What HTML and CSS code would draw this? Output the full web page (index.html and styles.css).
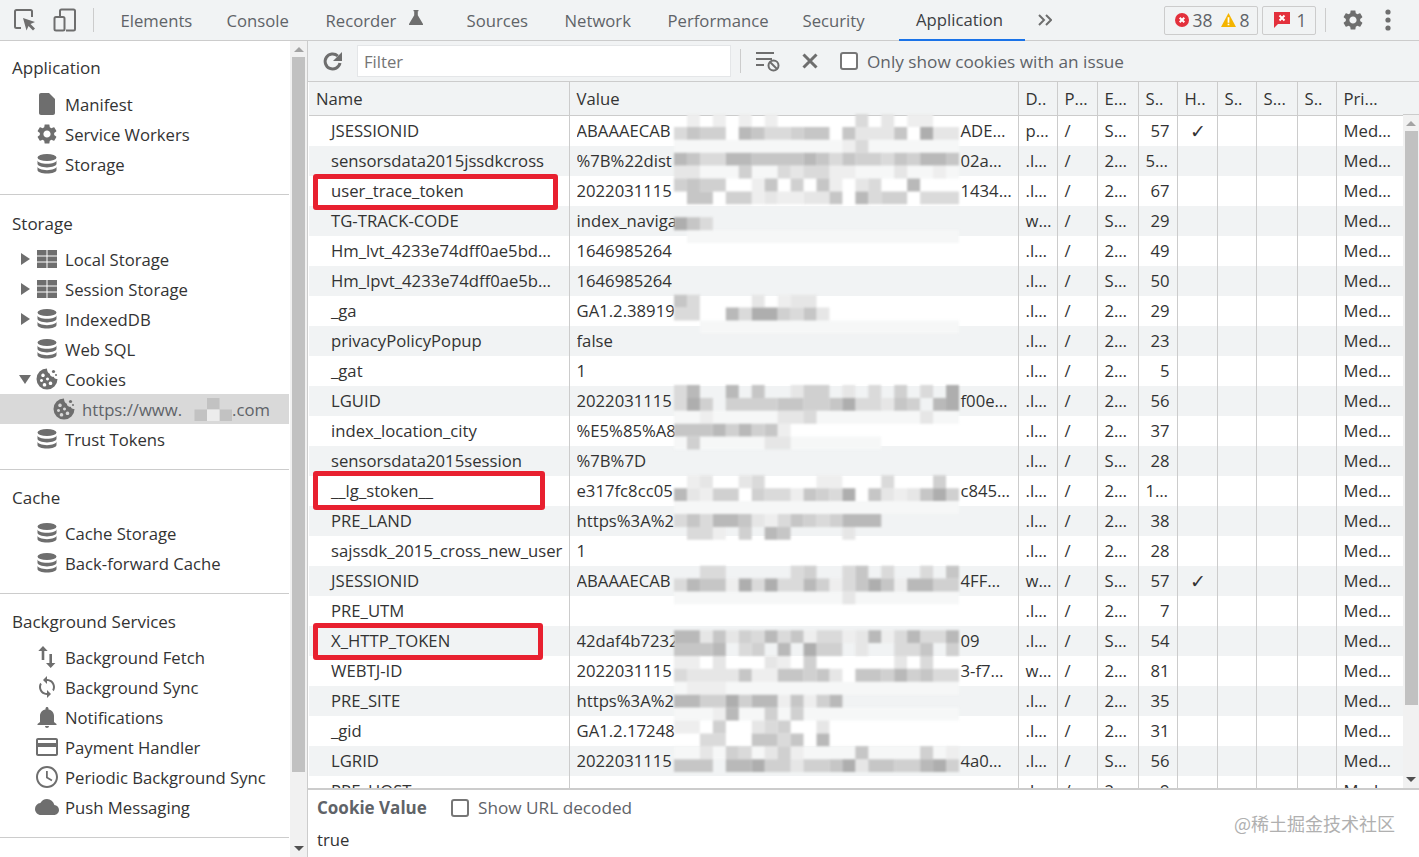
FILE: index.html
```html
<!DOCTYPE html>
<html lang="en">
<head>
<meta charset="utf-8">
<title>DevTools Application Cookies</title>
<link rel="stylesheet" href="styles.css">
</head>
<body>
<svg class="defs" aria-hidden="true">
  <symbol id="i-db" viewBox="0 0 24 24"><ellipse cx="12" cy="5.5" rx="9.5" ry="3.6"/><path d="M2.500 8.200c0 2 4.200 3.600 9.500 3.600s9.500-1.600 9.500-3.600v3.600c0 2-4.200 3.600-9.500 3.600s-9.500-1.600-9.500-3.600z"/><path d="M2.500 14.600c0 2 4.200 3.600 9.500 3.600s9.500-1.600 9.500-3.600v3.400c0 2-4.200 3.600-9.500 3.600s-9.500-1.600-9.500-3.600z"/></symbol>
  <symbol id="i-grid" viewBox="0 0 24 24"><path d="M2 3h9.500v5.400H2zM12.500 3H22v5.400h-9.500zM2 9.400h9.500v5.200H2zM12.500 9.400H22v5.200h-9.500zM2 15.600h9.500V21H2zM12.500 15.600H22V21h-9.500z"/></symbol>
  <symbol id="i-cookie" viewBox="0 0 24 24"><path fill-rule="evenodd" d="M12 1.500A10.500 10.500 0 1 0 22.500 12c-1.700.4-3.300-.6-3.700-2.200-2 .5-3.900-1-4-3-1.800-.5-3-3.300-2.800-5.300zM8 6.500a1.800 1.800 0 1 0 .01 0zM6.500 12a1.500 1.500 0 1 0 .01 0zM12.500 10.500a1.500 1.500 0 1 0 .01 0zM9.500 16a1.800 1.800 0 1 0 .01 0zM15.500 14.500a1.800 1.800 0 1 0 .01 0z"/><circle cx="18.500" cy="4.500" r="1.600"/><circle cx="21" cy="8" r="1"/></symbol>
  <symbol id="i-file" viewBox="0 0 24 24"><path d="M14 1H6C4.900 1 4 1.900 4 3v18c0 1.100.9 2 2 2h12c1.100 0 2-.9 2-2V7z"/></symbol>
  <symbol id="i-gear" viewBox="0 0 24 24"><path d="M19.140 12.940c.04-.3.06-.61.06-.94 0-.32-.02-.64-.07-.94l2.030-1.580c.18-.14.23-.41.12-.61l-1.920-3.320c-.12-.22-.37-.29-.59-.22l-2.390.96c-.5-.38-1.030-.7-1.620-.94l-.36-2.540c-.04-.24-.24-.41-.48-.41h-3.840c-.24 0-.43.17-.47.41l-.36 2.540c-.59.24-1.130.57-1.620.94l-2.390-.96c-.22-.08-.47 0-.59.22L2.740 8.870c-.12.21-.08.47.12.61l2.030 1.580c-.05.3-.09.63-.09.94s.02.64.07.94l-2.030 1.580c-.18.14-.23.41-.12.61l1.920 3.320c.12.22.37.29.59.22l2.390-.96c.5.38 1.030.7 1.620.94l.36 2.540c.05.24.24.41.48.41h3.840c.24 0 .44-.17.47-.41l.36-2.540c.59-.24 1.130-.56 1.620-.94l2.390.96c.22.08.47 0 .59-.22l1.920-3.320c.12-.22.07-.47-.12-.61l-2.010-1.580zM12 15.600c-1.980 0-3.600-1.620-3.600-3.600s1.620-3.600 3.600-3.600 3.600 1.620 3.600 3.600-1.620 3.600-3.600 3.600z"/></symbol>
  <symbol id="i-fetch" viewBox="0 0 24 24"><path d="M17 18V9h-2.600v9H11l4.700 5 4.700-5zM8 1L3.300 6h3.400v9h2.600V6h3.400z"/></symbol>
  <symbol id="i-sync" viewBox="0 0 24 24"><path d="M12 4V1L8 5l4 4V6c3.310 0 6 2.690 6 6 0 1.010-.25 1.970-.7 2.800l1.460 1.460A7.930 7.930 0 0 0 20 12c0-4.420-3.580-8-8-8zm0 14c-3.310 0-6-2.690-6-6 0-1.010.25-1.970.7-2.800L5.240 7.740A7.930 7.930 0 0 0 4 12c0 4.420 3.580 8 8 8v3l4-4-4-4v3z"/></symbol>
  <symbol id="i-bell" viewBox="0 0 24 24"><path d="M12 23c1.100 0 2-.9 2-2h-4c0 1.100.9 2 2 2zm7-6v-6c0-3.300-2-5.900-5.500-6.500V3.500C13.500 2.700 12.800 2 12 2s-1.500.7-1.500 1.500v1C7 5.100 5 7.700 5 11v6l-2.500 2v1h19v-1z"/></symbol>
  <symbol id="i-pay" viewBox="0 0 24 24"><path d="M21 3H3C1.900 3 1 3.900 1 5v14c0 1.100.9 2 2 2h18c1.100 0 2-.9 2-2V5c0-1.100-.9-2-2-2zm0 16H3v-7h18zm0-11H3V5h18z"/></symbol>
  <symbol id="i-clock" viewBox="0 0 24 24"><path d="M12 1C5.900 1 1 5.900 1 12s4.900 11 11 11 11-4.900 11-11S18.100 1 12 1zm0 20c-5 0-9-4-9-9s4-9 9-9 9 4 9 9-4 9-9 9zm.8-15H11v7l5.500 3.300.9-1.500-4.600-2.700z"/></symbol>
  <symbol id="i-cloud" viewBox="0 0 24 24"><path d="M19.350 10.040A7.490 7.490 0 0 0 12 4C9.110 4 6.600 5.640 5.350 8.040A5.994 5.994 0 0 0 0 14c0 3.310 2.690 6 6 6h13c2.760 0 5-2.240 5-5 0-2.640-2.050-4.780-4.650-4.960z"/></symbol>
</svg>

<div class="app">
  <header class="topbar">
    <svg class="ic ic-inspect" viewBox="0 0 22 22"><path class="line" d="M7 19H2.500a1.500 1.500 0 0 1-1.500-1.500v-15A1.500 1.500 0 0 1 2.500 1h14A1.500 1.500 0 0 1 18 2.500V8"/><path d="M9 9l12 4-4.500 2 4.500 4.500-2 2-4.500-4.500-2 4.500z"/></svg>
    <svg class="ic ic-device" viewBox="0 0 24 24"><path class="line" d="M7 9V3a1.500 1.500 0 0 1 1.500-1.500h12A1.500 1.500 0 0 1 22 3v18a1.500 1.500 0 0 1-1.500 1.500H13"/><rect class="line" x="1.500" y="9" width="10" height="13.500" rx="1.500"/></svg>
    <span class="vsep vsep-main"></span>
    <nav class="tabs">
      <span class="tab">Elements</span>
      <span class="tab">Console</span>
      <span class="tab">Recorder<svg class="flask" viewBox="0 0 14 15"><path d="M4.500 0h5v1.200H8.800v4L14 14c.2.500 0 1-.6 1H.6c-.6 0-.8-.5-.6-1l5.200-8.800v-4h-.7z"/></svg></span>
      <span class="tab">Sources</span>
      <span class="tab">Network</span>
      <span class="tab">Performance</span>
      <span class="tab">Security</span>
      <span class="tab tab-active">Application</span>
    </nav>
    <svg class="more" viewBox="0 0 14 12"><path d="M1 1l5 5-5 5M8 1l5 5-5 5"/></svg>
    <div class="badge badge-a">
      <svg class="bi" viewBox="0 0 14 14"><circle class="err" cx="7" cy="7" r="7"/><path class="wx" d="M4.700 4.700l4.600 4.600M9.300 4.700L4.700 9.300"/></svg><span class="bn">38</span>
      <svg class="bi bi-w" viewBox="0 0 14 13"><path class="warn" d="M7 0l7 13H0z"/><path class="wm" d="M6.200 4h1.600v5H6.200zM6.200 10h1.600v1.500H6.200z"/></svg><span class="bn">8</span>
    </div>
    <div class="badge badge-b">
      <svg class="bf" viewBox="0 0 16 16"><path class="err" d="M0 0h16v12H4l-4 4z"/><path class="wx" d="M5.500 3.500l5 5M10.500 3.500l-5 5"/></svg><span class="bn bn-1">1</span>
    </div>
    <span class="vsep vsep-right"></span>
    <svg class="ic ic-gear"><use href="#i-gear"/></svg>
    <svg class="ic ic-dots" viewBox="0 0 6 22"><circle cx="3" cy="3" r="2.600"/><circle cx="3" cy="11" r="2.600"/><circle cx="3" cy="19" r="2.600"/></svg>
  </header>

  <div class="main">
    <aside class="sidebar">
      <div class="side-list">
        <section class="sec sec-first">
          <h2 class="sec-h">Application</h2>
          <div class="it"><svg class="ii"><use href="#i-file"/></svg>Manifest</div>
          <div class="it"><svg class="ii"><use href="#i-gear"/></svg>Service Workers</div>
          <div class="it"><svg class="ii"><use href="#i-db"/></svg>Storage</div>
        </section>
        <section class="sec sec-storage">
          <h2 class="sec-h">Storage</h2>
          <div class="it"><i class="ar"></i><svg class="ii"><use href="#i-grid"/></svg>Local Storage</div>
          <div class="it"><i class="ar"></i><svg class="ii"><use href="#i-grid"/></svg>Session Storage</div>
          <div class="it"><i class="ar"></i><svg class="ii"><use href="#i-db"/></svg>IndexedDB</div>
          <div class="it"><svg class="ii"><use href="#i-db"/></svg>Web SQL</div>
          <div class="it"><i class="ar ar-open"></i><svg class="ii"><use href="#i-cookie"/></svg>Cookies</div>
          <div class="it it-sel"><svg class="ii"><use href="#i-cookie"/></svg>https://www.<svg class="host-blur" viewBox="0 0 4 2" preserveAspectRatio="none"><path class="hb1" d="M1 1h1v1H1zM2 0h1v1H2zM3 1h1v1H3z"/><path class="hb2" d="M2 1h1v1H2z"/></svg>.com</div>
          <div class="it"><svg class="ii"><use href="#i-db"/></svg>Trust Tokens</div>
        </section>
        <section class="sec">
          <h2 class="sec-h">Cache</h2>
          <div class="it"><svg class="ii"><use href="#i-db"/></svg>Cache Storage</div>
          <div class="it"><svg class="ii"><use href="#i-db"/></svg>Back-forward Cache</div>
        </section>
        <section class="sec">
          <h2 class="sec-h">Background Services</h2>
          <div class="it"><svg class="ii"><use href="#i-fetch"/></svg>Background Fetch</div>
          <div class="it"><svg class="ii"><use href="#i-sync"/></svg>Background Sync</div>
          <div class="it"><svg class="ii"><use href="#i-bell"/></svg>Notifications</div>
          <div class="it"><svg class="ii"><use href="#i-pay"/></svg>Payment Handler</div>
          <div class="it"><svg class="ii"><use href="#i-clock"/></svg>Periodic Background Sync</div>
          <div class="it"><svg class="ii"><use href="#i-cloud"/></svg>Push Messaging</div>
        </section>
      </div>
      <div class="vbar vbar-side">
        <i class="up"></i><b class="thumb thumb-side"></b><i class="down"></i>
      </div>
    </aside>

    <div class="pane">
      <div class="toolbar">
        <svg class="ic ic-refresh" viewBox="0 0 24 24"><path class="line line-thick" d="M19 14a7.500 7.500 0 1 1-2.200-7"/><path d="M21 3v9h-9z"/></svg>
        <div class="filter">Filter</div>
        <span class="vsep vsep-tool"></span>
        <svg class="ic ic-cf" viewBox="0 0 26 22"><path class="line" d="M1 3h18M1 9h16M1 15h8"/><circle class="line" cx="18.500" cy="15.500" r="5"/><path class="line" d="M15 12l7 7"/></svg>
        <svg class="ic ic-x" viewBox="0 0 16 16"><path class="line line-thick" d="M1.500 1.500l13 13M14.500 1.500l-13 13"/></svg>
        <span class="cb cb-tool"></span>
        <span class="tool-label">Only show cookies with an issue</span>
      </div>

      <div class="gridwrap">
        <div class="grid">
          <table class="tbl">
            <colgroup>
              <col class="c-name"><col class="c-val"><col class="c-d"><col class="c-p"><col class="c-e"><col class="c-s"><col class="c-h"><col class="c-d"><col class="c-e"><col class="c-d"><col class="c-pri">
            </colgroup>
            <thead>
              <tr><th>Name</th><th>Value</th><th>D..</th><th>P...</th><th>E...</th><th>S..</th><th>H..</th><th>S..</th><th>S...</th><th>S..</th><th>Pri...</th></tr>
            </thead>
            <tbody>
              <tr><td class="n">JSESSIONID</td><td><div class="val"><span class="vl">ABAAAECAB</span><span class="vr">ADE…</span></div></td><td>p…</td><td>/</td><td>S…</td><td class="sz">57</td><td class="ck">✓</td><td></td><td></td><td></td><td>Med…</td></tr>
              <tr><td class="n">sensorsdata2015jssdkcross</td><td><div class="val"><span class="vl">%7B%22dist</span><span class="vr">02a…</span></div></td><td>.l…</td><td>/</td><td>2…</td><td>5…</td><td></td><td></td><td></td><td></td><td>Med…</td></tr>
              <tr><td class="n">user_trace_token</td><td><div class="val"><span class="vl">2022031115</span><span class="vr">1434…</span></div></td><td>.l…</td><td>/</td><td>2…</td><td class="sz">67</td><td></td><td></td><td></td><td></td><td>Med…</td></tr>
              <tr><td class="n">TG-TRACK-CODE</td><td><div class="val"><span class="vl">index_naviga</span></div></td><td>w…</td><td>/</td><td>S…</td><td class="sz">29</td><td></td><td></td><td></td><td></td><td>Med…</td></tr>
              <tr><td class="n">Hm_lvt_4233e74dff0ae5bd…</td><td><div class="val"><span class="vl">1646985264</span></div></td><td>.l…</td><td>/</td><td>2…</td><td class="sz">49</td><td></td><td></td><td></td><td></td><td>Med…</td></tr>
              <tr><td class="n">Hm_lpvt_4233e74dff0ae5b…</td><td><div class="val"><span class="vl">1646985264</span></div></td><td>.l…</td><td>/</td><td>S…</td><td class="sz">50</td><td></td><td></td><td></td><td></td><td>Med…</td></tr>
              <tr><td class="n">_ga</td><td><div class="val"><span class="vl">GA1.2.38919</span></div></td><td>.l…</td><td>/</td><td>2…</td><td class="sz">29</td><td></td><td></td><td></td><td></td><td>Med…</td></tr>
              <tr><td class="n">privacyPolicyPopup</td><td><div class="val"><span class="vl">false</span></div></td><td>.l…</td><td>/</td><td>2…</td><td class="sz">23</td><td></td><td></td><td></td><td></td><td>Med…</td></tr>
              <tr><td class="n">_gat</td><td><div class="val"><span class="vl">1</span></div></td><td>.l…</td><td>/</td><td>2…</td><td class="sz">5</td><td></td><td></td><td></td><td></td><td>Med…</td></tr>
              <tr><td class="n">LGUID</td><td><div class="val"><span class="vl">2022031115</span><span class="vr">f00e…</span></div></td><td>.l…</td><td>/</td><td>2…</td><td class="sz">56</td><td></td><td></td><td></td><td></td><td>Med…</td></tr>
              <tr><td class="n">index_location_city</td><td><div class="val"><span class="vl">%E5%85%A8</span></div></td><td>.l…</td><td>/</td><td>2…</td><td class="sz">37</td><td></td><td></td><td></td><td></td><td>Med…</td></tr>
              <tr><td class="n">sensorsdata2015session</td><td><div class="val"><span class="vl">%7B%7D</span></div></td><td>.l…</td><td>/</td><td>S…</td><td class="sz">28</td><td></td><td></td><td></td><td></td><td>Med…</td></tr>
              <tr><td class="n">__lg_stoken__</td><td><div class="val"><span class="vl">e317fc8cc05</span><span class="vr">c845…</span></div></td><td>.l…</td><td>/</td><td>2…</td><td>1…</td><td></td><td></td><td></td><td></td><td>Med…</td></tr>
              <tr><td class="n">PRE_LAND</td><td><div class="val"><span class="vl">https%3A%2</span></div></td><td>.l…</td><td>/</td><td>2…</td><td class="sz">38</td><td></td><td></td><td></td><td></td><td>Med…</td></tr>
              <tr><td class="n">sajssdk_2015_cross_new_user</td><td><div class="val"><span class="vl">1</span></div></td><td>.l…</td><td>/</td><td>2…</td><td class="sz">28</td><td></td><td></td><td></td><td></td><td>Med…</td></tr>
              <tr><td class="n">JSESSIONID</td><td><div class="val"><span class="vl">ABAAAECAB</span><span class="vr">4FF…</span></div></td><td>w…</td><td>/</td><td>S…</td><td class="sz">57</td><td class="ck">✓</td><td></td><td></td><td></td><td>Med…</td></tr>
              <tr><td class="n">PRE_UTM</td><td></td><td>.l…</td><td>/</td><td>2…</td><td class="sz">7</td><td></td><td></td><td></td><td></td><td>Med…</td></tr>
              <tr><td class="n">X_HTTP_TOKEN</td><td><div class="val"><span class="vl">42daf4b7232</span><span class="vr">09</span></div></td><td>.l…</td><td>/</td><td>S…</td><td class="sz">54</td><td></td><td></td><td></td><td></td><td>Med…</td></tr>
              <tr><td class="n">WEBTJ-ID</td><td><div class="val"><span class="vl">2022031115</span><span class="vr">3-f7…</span></div></td><td>w…</td><td>/</td><td>2…</td><td class="sz">81</td><td></td><td></td><td></td><td></td><td>Med…</td></tr>
              <tr><td class="n">PRE_SITE</td><td><div class="val"><span class="vl">https%3A%2</span></div></td><td>.l…</td><td>/</td><td>2…</td><td class="sz">35</td><td></td><td></td><td></td><td></td><td>Med…</td></tr>
              <tr><td class="n">_gid</td><td><div class="val"><span class="vl">GA1.2.17248</span></div></td><td>.l…</td><td>/</td><td>2…</td><td class="sz">31</td><td></td><td></td><td></td><td></td><td>Med…</td></tr>
              <tr><td class="n">LGRID</td><td><div class="val"><span class="vl">2022031115</span><span class="vr">4a0…</span></div></td><td>.l…</td><td>/</td><td>S…</td><td class="sz">56</td><td></td><td></td><td></td><td></td><td>Med…</td></tr>
              <tr><td class="n">PRE_HOST</td><td></td><td>.l…</td><td>/</td><td>2…</td><td class="sz">9</td><td></td><td></td><td></td><td></td><td>Med…</td></tr>
            </tbody>
          </table>
        </div>
        <div class="vbar vbar-grid">
          <span class="gs-head"></span>
          <i class="up"></i><b class="thumb thumb-grid"></b><i class="down"></i>
        </div>

        <svg class="mosaic" viewBox="0 0 22 52" preserveAspectRatio="none" aria-hidden="true">
          <g transform="translate(0 .5)">
            <path class="s8" d="M0 2h22M0 4h22M1 9h21M2 16h20M0 23h22M0 25h16M0 30h22M0 37h22M0 44h22M0 46h22M0 49h22"/>
            <path class="s7" d="M1 0h1M3 0h1M5 0h1M7 0h1M18 0h2M13 2h1M12 4h2M20 4h1M6 5h1M12 5h1M6 6h1M8 6h2M8 14h1M2 23h1M8 24h1M1 28h1M11 28h2M2 29h1M9 29h1M17 29h1M7 31h1M3 32h1M4 36h1M12 36h1M17 36h1M10 40h1M13 40h1M16 40h1M0 42h2M8 42h1M6 43h2M1 44h3M8 45h1M10 45h1M3 46h1M0 47h2M9 49h1M21 49h1"/>
            <path class="s6" d="M16 0h1M14 1h3M20 1h2M0 4h2M9 4h1M17 4h1M14 5h1M7 6h1M10 6h2M6 14h1M9 14h2M11 15h1M9 21h1M13 21h1M16 22h1M8 23h2M19 23h1M7 25h2M2 28h1M5 28h1M1 29h1M16 29h1M18 29h1M6 31h1M13 32h1M13 37h1M2 40h1M4 40h1M14 40h1M14 41h1M3 42h1M7 42h1M17 42h1M1 43h4M12 43h1M6 47h1M11 47h1M2 49h1M7 49h1M9 50h1M14 50h1"/>
            <path class="s5" d="M14 0h1M0 1h1M7 1h2M14 2h1M2 3h2M12 3h1M16 3h1M8 4h1M10 4h2M15 5h1M15 6h1M19 6h3M2 8h1M1 14h1M0 15h2M5 15h1M9 15h1M0 21h1M15 21h1M19 21h1M0 22h1M14 22h2M10 23h1M6 28h1M16 28h1M7 29h2M12 29h1M0 31h1M2 31h1M8 31h1M11 31h1M1 32h2M2 35h2M9 35h1M13 35h1M16 35h1M19 35h1M0 36h1M6 36h1M8 36h2M13 36h1M6 40h1M8 40h1M11 40h2M17 40h1M19 40h2M5 41h1M17 41h2M19 42h1M0 43h1M20 43h2M7 47h1M2 48h2M8 48h1M5 49h1"/>
            <path class="s4" d="M2 1h2M9 1h1M14 3h2M18 3h1M5 4h1M0 5h1M2 5h2M9 5h1M4 6h2M16 6h2M8 15h1M10 21h2M17 21h1M2 22h1M4 22h4M10 22h2M18 22h1M4 24h1M6 24h1M1 25h1M20 28h1M3 29h2M6 29h1M11 29h1M21 29h1M10 31h1M12 31h1M5 32h1M10 35h1M11 36h1M20 36h2M5 40h1M6 41h1M11 41h2M21 41h1M10 42h1M10 43h1M16 43h1M18 43h1M2 45h2M5 45h1M11 45h1M7 46h1M9 46h1M3 47h1M8 47h1M4 49h1M8 49h1M19 49h1M7 50h2M10 50h2M17 50h2M21 50h1"/>
            <path class="s3" d="M1 1h1M6 1h1M10 1h2M13 1h1M17 1h1M1 3h1M6 3h4M11 3h1M13 3h1M17 3h1M21 3h1M1 5h1M7 5h1M11 5h1M1 6h2M12 6h1M1 8h1M0 14h1M10 15h1M6 21h1M8 22h2M12 22h1M17 22h1M0 24h3M7 24h1M10 29h1M15 29h1M19 29h1M1 31h1M5 31h1M9 31h1M8 32h1M14 35h1M21 35h1M2 36h2M14 36h1M16 36h1M3 40h1M9 40h1M0 41h3M19 41h1M5 43h1M8 43h2M11 43h1M14 43h2M19 43h1M9 45h1M6 48h2M9 48h1M14 49h1M0 50h3M12 50h1M15 50h2"/>
            <path class="s2" d="M5 1h1M0 3h1M4 3h2M10 3h1M19 3h2M18 5h1M14 6h1M4 15h1M1 21h1M4 21h1M20 22h1M3 24h1M5 24h1M0 29h1M3 31h2M13 31h3M7 32h1M1 36h1M10 36h1M18 36h2M0 40h2M7 40h1M15 40h1M18 40h1M21 40h1M3 41h1M8 41h1M17 43h1M0 45h2M6 45h2M12 45h1M4 46h1M11 48h1M4 50h2M19 50h1"/>
            <path class="s1" d="M19 1h1M0 8h1M6 15h2M21 21h1M1 22h1M13 22h1M21 22h1M13 29h1M20 29h1M5 36h1M7 36h1M15 36h1M10 41h1M4 45h1M6 50h1M13 50h1M20 50h1"/>
          </g>
        </svg>

        <span class="mark mark-a"></span>
        <span class="mark mark-b"></span>
        <span class="mark mark-c"></span>
      </div>

      <div class="detail">
        <div class="detail-top">
          <strong class="detail-title">Cookie Value</strong>
          <span class="cb"></span>
          <span class="tool-label">Show URL decoded</span>
        </div>
        <div class="detail-val">true</div>
        <div class="watermark">@稀土掘金技术社区</div>
      </div>
    </div>
  </div>
</div>
</body>
</html>
```

FILE: styles.css
```css
* { box-sizing: border-box; }
html, body { margin: 0; padding: 0; }
body { font-family: "Open Sans", "Noto Sans", sans-serif; font-size: 16.7px; color: #333; background: #fff; }
.defs { position: absolute; width: 0; height: 0; }
.app { width: 1419px; height: 857px; display: flex; flex-direction: column; overflow: hidden; }

.ic { flex: none; fill: #6e6e6e; }
.line { fill: none; stroke: #6e6e6e; stroke-width: 2; }
.line-thick { stroke-width: 3; }

.topbar { flex: none; height: 41px; display: flex; align-items: center; background: #f1f3f4; border-bottom: 1px solid #ccc; color: #5f6368; }
.ic-inspect { width: 22px; height: 22px; margin-left: 14px; }
.ic-device { width: 24px; height: 24px; margin-left: 17px; }
.vsep { flex: none; width: 1px; background: #ccc; }
.vsep-main { height: 24px; margin-left: 16px; }
.tabs { flex: none; display: grid; grid-template-columns: 106px 99px 141px 98px 103px 135px 113.500px 126px; align-self: stretch; margin-left: 9px; }
.tab { display: flex; align-items: center; padding-left: 17.500px; white-space: nowrap; }
.flask { width: 14px; height: 15px; margin: -6px 0 0 13px; fill: #6e6e6e; }
.tab-active { color: #3c4043; border-bottom: 2px solid #1a73e8; margin-bottom: -1px; }
.more { width: 14px; height: 12px; margin-left: 13px; fill: none; stroke: #6e6e6e; stroke-width: 2; }
.badge { flex: none; display: flex; align-items: center; height: 29px; border: 1px solid #ccc; border-radius: 2px; font-size: 17.500px; }
.badge-a { width: 94px; margin-left: 112px; padding-left: 10px; }
.badge-b { width: 54px; margin-left: 4px; padding-left: 11px; }
.bi { width: 14px; height: 14px; }
.bi-w { width: 15px; margin-left: 8px; }
.bf { width: 16px; height: 16px; }
.bn { margin-left: 4px; color: #5f6368; }
.bn-1 { margin-left: 7px; }
.err { fill: #e3303c; }
.warn { fill: #f4b400; }
.wm { fill: #fff; }
.wx { stroke: #fff; stroke-width: 2; fill: none; }
.vsep-right { height: 24px; margin-left: 9px; }
.ic-gear { width: 24px; height: 24px; margin-left: 15px; }
.ic-dots { width: 6px; height: 22px; margin-left: 20px; }

.main { flex: 1; min-height: 0; display: flex; }
.sidebar { flex: none; width: 308px; display: flex; border-right: 1px solid #ccc; }
.side-list { flex: none; width: 290px; padding-right: 1px; }
.sec { border-bottom: 1px solid #ccc; padding: 13px 0 15px; }
.sec-first { padding-top: 12px; }
.sec-first .sec-h { margin-bottom: 6px; }
.sec-storage { padding-top: 14px; }
.sec-h { margin: 0 0 5px; height: 30px; line-height: 30px; padding-left: 12px; font-size: 17px; font-weight: 400; }
.it { position: relative; display: flex; align-items: center; height: 30px; padding-left: 35px; white-space: nowrap; }
.ii { flex: none; width: 24px; height: 24px; margin-right: 6px; fill: #6e6e6e; }
.ar { position: absolute; left: 21px; top: 9px; border-style: solid; border-width: 6px 0 6px 9px; border-color: transparent transparent transparent #6e6e6e; }
.ar-open { left: 19px; top: 11px; border-width: 9px 6px 0; border-color: #6e6e6e transparent transparent; }
.it-sel { background: #d9d9d9; padding-left: 52px; color: #5f6368; }
.host-blur { flex: none; width: 50px; height: 23px; }
.hb1 { fill: #c2c2c2; }
.hb2 { fill: #ececec; }

.vbar { flex: none; width: 17px; display: flex; flex-direction: column; align-items: center; background: #f1f1f1; position: relative; }
.up { flex: none; width: 0; height: 0; margin: 6px 0 5px; border-style: solid; border-width: 0 5px 5px; border-color: transparent transparent #a3a3a3; }
.down { flex: none; width: 0; height: 0; position: absolute; bottom: 6px; border-style: solid; border-width: 5px 5px 0; border-color: #505050 transparent transparent; }
.thumb { flex: none; display: block; width: 13px; background: #c1c1c1; }
.thumb-side { height: 715px; }
.thumb-grid { height: 574px; }

.pane { flex: 1; min-width: 0; display: flex; flex-direction: column; }
.toolbar { flex: none; height: 41px; display: flex; align-items: center; background: #f1f3f4; border-bottom: 1px solid #ccc; }
.ic-refresh { width: 24px; height: 24px; margin-left: 13px; }
.filter { flex: none; width: 374px; height: 32px; margin-left: 12px; padding-left: 6px; line-height: 31px; background: #fff; border: 1px solid #e4e6e8; color: #757575; }
.vsep-tool { height: 24px; margin-left: 9px; }
.ic-cf { width: 26px; height: 22px; margin-left: 14px; }
.ic-x { width: 16px; height: 16px; margin-left: 21px; }
.cb { flex: none; width: 18px; height: 18px; border: 2px solid #767676; border-radius: 3px; background: #fff; }
.cb-tool { margin-left: 22px; }
.tool-label { margin-left: 9px; color: #5f6368; white-space: nowrap; font-size: 17.200px; }

.gridwrap { flex: none; height: 708px; position: relative; display: flex; border-bottom: 2px solid #ccc; overflow: hidden; }
.grid { flex: none; width: 1094px; margin-left: 1px; overflow: hidden; }
.vbar-grid { width: 16px; }
.gs-head { flex: none; align-self: stretch; height: 33px; background: #f1f3f4; border-bottom: 1px solid #ccc; }
.tbl { width: 1094px; table-layout: fixed; border-collapse: collapse; }
.c-name { width: 260px; }
.c-val { width: 449px; }
.c-d { width: 39px; }
.c-p { width: 40px; }
.c-e { width: 41px; }
.c-s { width: 39px; }
.c-h { width: 40px; }
.c-pri { width: 67px; }
.tbl th, .tbl td { height: 30px; padding: 0 0 0 7px; border-right: 1px solid #ccc; font-weight: 400; text-align: left; white-space: nowrap; overflow: hidden; line-height: 30px; }
.tbl th:last-child, .tbl td:last-child { border-right: 0; }
.tbl th { height: 33px; padding-top: 1px; background: #f1f3f4; border-bottom: 1px solid #ccc; }
.tbl tbody tr:nth-child(even) td { background: #f1f3f4; }
.tbl td.n { padding-left: 22px; }
.tbl td.sz { text-align: right; padding-right: 7px; }
.tbl td.ck { padding-left: 12px; font-size: 18.500px; }
.val { display: flex; }
.vl { flex: none; width: 98px; overflow: hidden; }
.vr { flex: none; margin-left: 286px; }

.mosaic { position: absolute; left: 365.500px; top: 32px; width: 285px; height: 671px; fill: none; stroke-width: 1; filter: blur(.8px); }
.s1 { stroke: #aeaeae; }
.s2 { stroke: #b9b9b9; }
.s3 { stroke: #c6c6c6; }
.s4 { stroke: #d0d0d0; }
.s5 { stroke: #dadada; }
.s6 { stroke: #e6e6e6; }
.s7 { stroke: #eeeeee; }
.s8 { stroke: #f6f7f7; }

.mark { position: absolute; left: 5px; border: 5px solid #e8202f; border-radius: 3px; }
.mark-a { top: 92px; width: 245px; height: 36px; }
.mark-b { top: 389px; width: 232px; height: 39px; }
.mark-c { top: 541px; width: 230px; height: 37px; }

.detail { flex: 1; min-height: 0; position: relative; background: #fff; }
.detail-top { display: flex; align-items: center; height: 35px; padding: 0 0 0 9px; }
.detail-title { flex: none; width: 134px; color: #5f6368; font-weight: 700; font-size: 17px; }
.detail-val { padding-left: 9px; line-height: 30px; }
.watermark { position: absolute; right: 24px; top: 20px; font-family: "Noto Sans CJK SC", sans-serif; font-size: 18px; color: #b0b0b0; white-space: nowrap; }
```
